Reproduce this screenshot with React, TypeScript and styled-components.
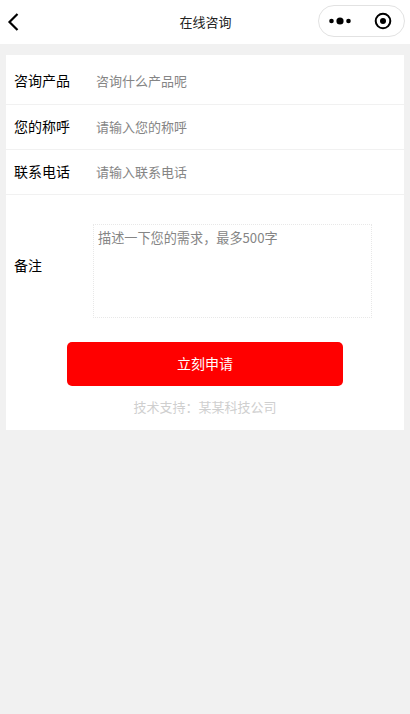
import React from "react";
import styled, { createGlobalStyle } from "styled-components";

const Global = createGlobalStyle`
  html, body { margin: 0; padding: 0; background: #f1f1f1; }
  body { font-family: "Noto Sans CJK SC", "Liberation Sans", sans-serif; }
  * { box-sizing: border-box; }
`;

const Page = styled.div`
  width: 410px;
  height: 714px;
  overflow: hidden;
  background: #f1f1f1;
`;

const NavBar = styled.header`
  height: 44px;
  background: #fff;
  display: grid;
  grid-template-columns: 1fr auto 1fr;
  align-items: center;
  padding: 0 5px 0 7px;
`;

const BackButton = styled.div`
  display: flex;
  align-items: center;
  height: 44px;
  padding-bottom: 1px;
`;

const Title = styled.h1`
  margin: 0 1px 0 0;
  font-size: 13px;
  font-weight: 400;
  color: #222;
  line-height: 44px;
`;

const Capsule = styled.div`
  justify-self: end;
  width: 87px;
  height: 32px;
  margin-bottom: 3px;
  border: 1px solid #e2e2e2;
  border-radius: 16px;
  background: #fff;
  display: flex;
  align-items: center;
  justify-content: space-between;
  padding: 0 12px 0 10px;
`;

const Card = styled.main`
  margin: 11px 6px 0;
  height: 375px;
  background: #fff;
`;

const Row = styled.label<{ $first?: boolean }>`
  display: flex;
  align-items: center;
  height: ${(p) => (p.$first ? "50px" : "45px")};
  padding: ${(p) => (p.$first ? "3px" : "0")} 0 2px 8px;
  border-bottom: 1px solid #f1f1f1;
`;

const Label = styled.span`
  width: 82px;
  flex: none;
  font-size: 14px;
  color: #000;
`;

const Field = styled.input`
  flex: 1;
  min-width: 0;
  border: 0;
  outline: 0;
  padding: 0;
  background: transparent;
  font: inherit;
  font-size: 13px;
  &::placeholder { color: #858585; opacity: 1; }
`;

const NoteRow = styled.label`
  display: flex;
  padding: 29px 0 0 8px;
`;

const NoteLabel = styled(Label)`
  width: 79px;
  align-self: center;
  margin-bottom: 12px;
`;

const NoteArea = styled.textarea`
  width: 279px;
  height: 94px;
  border: 1px dotted #e8e8e8;
  outline: 0;
  resize: none;
  padding: 3px 4px;
  font: inherit;
  font-size: 13.15px;
  line-height: 20px;
  &::placeholder { color: #858585; opacity: 1; }
`;

const Submit = styled.button`
  display: block;
  width: 276px;
  height: 44px;
  margin: 24px auto 0 61px;
  padding: 0 0 2px;
  border: 0;
  border-radius: 5px;
  background: #ff0000;
  color: #fff;
  font: inherit;
  font-size: 14px;
`;

const Support = styled.p`
  margin: 11px 0 0;
  text-align: center;
  font-size: 13px;
  line-height: 20px;
  color: #cfcfcf;
`;

export default function App() {
  return (
    <Page>
      <Global />
      <NavBar>
        <BackButton>
          <svg width="12" height="20" viewBox="0 0 12 20" fill="none">
            <path d="M10.5 2 L2.5 10 L10.5 18" stroke="#000" strokeWidth="2.2" />
          </svg>
        </BackButton>
        <Title>在线咨询</Title>
        <Capsule>
          <svg width="24" height="10" viewBox="0 0 24 10">
            <circle cx="2.5" cy="5" r="2.3" fill="#000" />
            <circle cx="11" cy="5" r="3.6" fill="#000" />
            <circle cx="19.5" cy="5" r="2.3" fill="#000" />
          </svg>
          <svg width="18" height="18" viewBox="0 0 18 18">
            <circle cx="9" cy="9" r="7.3" fill="none" stroke="#000" strokeWidth="2" />
            <circle cx="9" cy="9" r="3" fill="#000" />
          </svg>
        </Capsule>
      </NavBar>
      <Card>
        <Row $first>
          <Label>咨询产品</Label>
          <Field placeholder="咨询什么产品呢" />
        </Row>
        <Row>
          <Label>您的称呼</Label>
          <Field placeholder="请输入您的称呼" />
        </Row>
        <Row>
          <Label>联系电话</Label>
          <Field placeholder="请输入联系电话" />
        </Row>
        <NoteRow>
          <NoteLabel>备注</NoteLabel>
          <NoteArea placeholder="描述一下您的需求，最多500字" />
        </NoteRow>
        <Submit>立刻申请</Submit>
        <Support>技术支持：某某科技公司</Support>
      </Card>
    </Page>
  );
}
